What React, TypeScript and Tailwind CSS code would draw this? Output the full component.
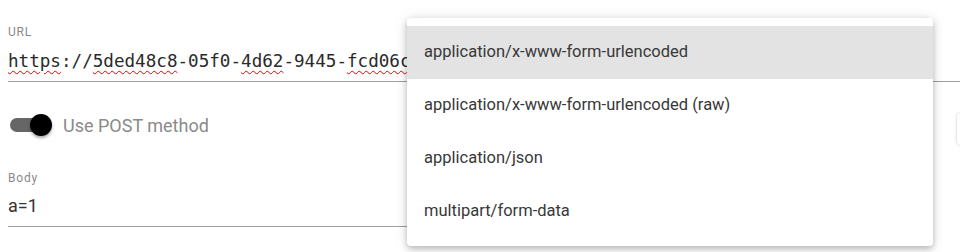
import React from 'react';

const CONTENT_TYPES = [
    'application/x-www-form-urlencoded',
    'application/x-www-form-urlencoded (raw)',
    'application/json',
    'multipart/form-data'
];

const squiggle = 'underline decoration-wavy decoration-[#e00] decoration-1 underline-offset-[3px]';

export default function App() {
    return (
        <div
            className="relative w-[960px] h-[252px] overflow-hidden bg-white"
            style={{ fontFamily: 'Roboto, "Noto Sans", sans-serif' }}
        >
            {/* URL field */}
            <div className="pt-[25px] pl-2">
                <div className="text-[12px] leading-[14px] tracking-[0.8px] text-[#8a8a8a]">URL</div>
                <div
                    className="h-[43px] pt-[9px] border-b border-[#9e9e9e] whitespace-nowrap overflow-hidden text-[17.6px] leading-[26px] text-[#2a2a2a]"
                    style={{ fontFamily: '"DejaVu Sans Mono", "Liberation Mono", monospace' }}
                >
                    <span className={squiggle}>https</span>://<span className={squiggle}>5ded48c8</span>-05f0-<span className={squiggle}>4d62</span>-9445-<span className={squiggle}>fcd06c21a7b3</span>.mock.pstmn.io/post
                </div>
            </div>

            {/* POST switch */}
            <div className="flex items-center h-[30px] mt-[28px] pl-[10px]">
                <div className="relative w-[38px] h-[14px]">
                    <div className="w-[36px] h-[14px] rounded-full bg-[#666]" />
                    <div className="absolute left-[20px] top-[-4px] w-[22px] h-[22px] rounded-full bg-black shadow-[0_2px_3px_rgba(0,0,0,0.35)]" />
                </div>
                <span className="ml-[15px] text-[18px] text-[#8a8a8a]">Use POST method</span>
            </div>

            {/* Body field */}
            <div className="pt-[31px] pl-2 pr-[27px]">
                <div className="text-[12px] leading-[14px] tracking-[0.8px] text-[#8a8a8a]">Body</div>
                <div className="h-[42px] pt-[9px] border-b border-[#9e9e9e] text-[18px] leading-[24px] text-[#333]">a=1</div>
            </div>

            {/* cut-off button at right edge */}
            <div className="absolute left-[957px] top-[113px] w-[20px] h-[32px] rounded bg-white shadow-[0_0_3px_rgba(0,0,0,0.25)]" />

            {/* content type menu */}
            <div className="absolute left-[407px] top-[18px] w-[526px] h-[228px] py-2 rounded bg-white shadow-[0_3px_6px_rgba(0,0,0,0.22),0_1px_14px_rgba(0,0,0,0.12)]">
                {CONTENT_TYPES.map((type, i) => (
                    <div
                        key={type}
                        className={`h-[53px] flex items-center px-[17px] text-[16.5px] text-[#383838] ${i === 0 ? 'bg-[#e3e3e3]' : ''}`}
                    >
                        {type}
                    </div>
                ))}
            </div>
        </div>
    );
}
